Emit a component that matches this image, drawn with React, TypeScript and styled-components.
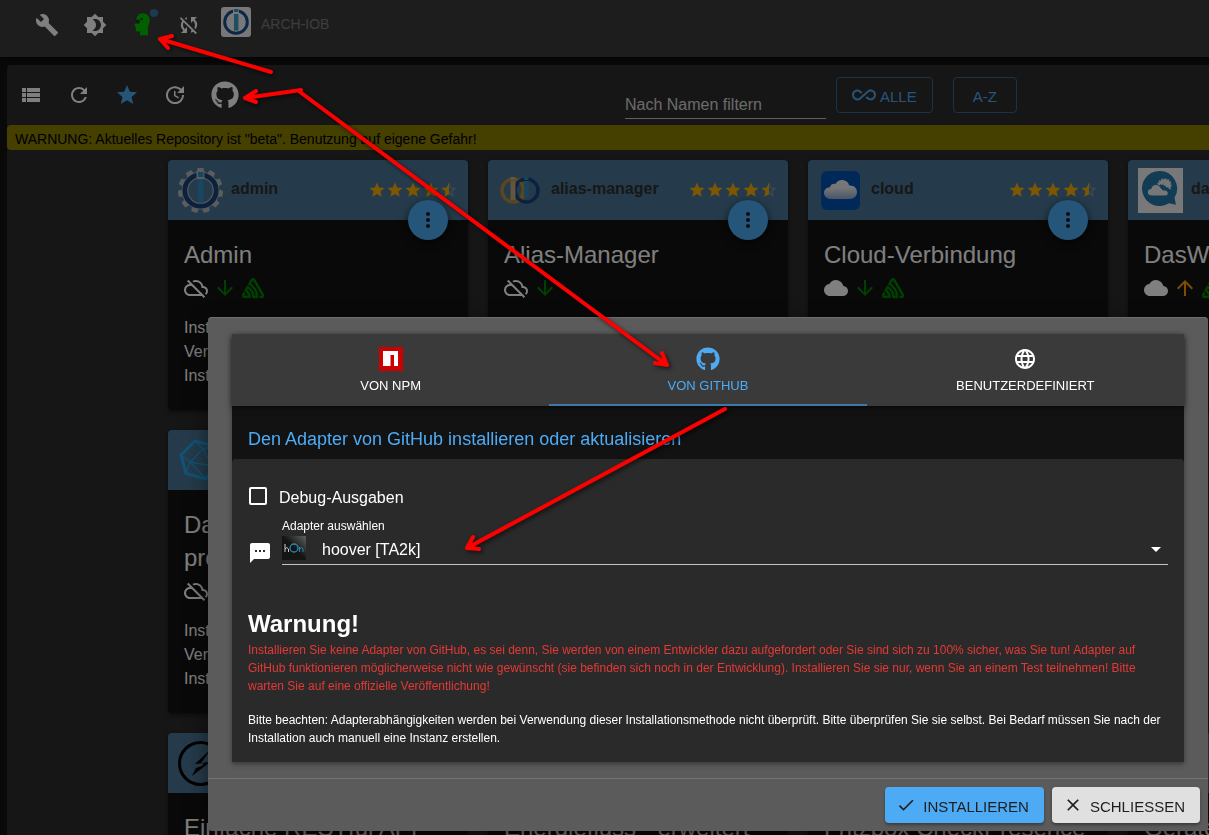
import React from 'react';
import styled, { createGlobalStyle } from 'styled-components';
import {
  MdAllInclusive,
  MdArrowDownward,
  MdArrowDropDown,
  MdArrowUpward,
  MdBrightness4,
  MdBuild,
  MdCheck,
  MdClose,
  MdCloud,
  MdLanguage,
  MdMoreVert,
  MdOutlineCloudOff,
  MdRefresh,
  MdSms,
  MdStar,
  MdStarBorder,
  MdSyncDisabled,
  MdUpdate,
  MdViewList,
} from 'react-icons/md';
import { FaGithub } from 'react-icons/fa';
import { SiSentry } from 'react-icons/si';

const GlobalStyle = createGlobalStyle`
  *, *::before, *::after { box-sizing: border-box; }
  html, body { margin: 0; height: 100%; overflow: hidden; }
  body {
    background: #121212;
    color: #fff;
    font-family: 'Liberation Sans', Arial, Helvetica, sans-serif;
    font-size: 16px;
    line-height: 24px;
  }
  #root { height: 100%; }
  button, input, select { font: inherit; color: inherit; }
  button { cursor: pointer; }
`;

/* ---------- page behind the dialog ---------- */

const Page = styled.div`
  height: 100vh;
  overflow: hidden;
`;

const AppBar = styled.header`
  display: flex;
  align-items: center;
  height: 57px;
  padding: 0 23px 8px;
  background: #3b3b3b;
  box-shadow: 0 2px 8px rgba(0, 0, 0, 0.6);
`;

const IconButton = styled.button<{ $color?: string }>`
  position: relative;
  display: flex;
  align-items: center;
  justify-content: center;
  min-width: 48px;
  height: 48px;
  padding: 0;
  border: 0;
  background: none;
  color: ${(p) => p.$color ?? '#fff'};
`;

const ExpertButton = styled(IconButton)`
  padding-right: 2px;
`;

const GithubButton = styled(IconButton)`
  min-width: 52px;
`;

const Dot = styled.span`
  position: absolute;
  top: 8px;
  right: 9px;
  width: 8px;
  height: 8px;
  border-radius: 50%;
  background: #3f73a5;
`;

const SyncState = styled.span`
  display: flex;
  padding: 0 20px 0 10px;
`;

const HostLogo = styled.span`
  display: flex;
  width: 30px;
  height: 30px;
  margin: -6px 10px 0 0;
  border-radius: 3px;
  background: #f0f0f0;
`;

const HostName = styled.span`
  margin-top: -2px;
  font-size: 14px;
  color: #7a7a7a;
`;

const Content = styled.main`
  margin: 8px 0 0 7px;
  height: calc(100% - 65px);
  border-radius: 4px 0 0 0;
  background: #2c2c2c;
`;

const Toolbar = styled.div`
  display: flex;
  align-items: center;
  height: 60px;
  overflow: hidden;
`;

const ToolGroup = styled.div`
  display: flex;
  width: 51%;
`;

const Filters = styled.div`
  display: flex;
  align-items: center;
`;

const FilterInput = styled.input`
  width: 201px;
  height: 32px;
  margin: 15px 10px 0 5px;
  padding: 8px 0 3px;
  border: 0;
  border-bottom: 1px solid #c0c0c0;
  background: none;
  &::placeholder { color: #fff; opacity: 0.8; }
`;

const OutlinedButton = styled.button`
  display: flex;
  align-items: center;
  gap: 4px;
  height: 36px;
  margin-right: 20px;
  padding: 4px 15px 0;
  border: 1px solid #2f6894;
  border-radius: 4px;
  background: none;
  color: #4dabf5;
  font-size: 15px;
  svg { margin-top: -5px; }
`;

const SortButton = styled(OutlinedButton)`
  width: 64px;
  justify-content: center;
`;

const Notice = styled.div`
  height: 25px;
  padding: 2px 8px 0;
  border-radius: 4px 0 0 4px;
  background: #8a7e00;
  color: #000;
  font-size: 14px;
`;

const CardList = styled.div`
  display: grid;
  gap: 20px;
  padding: 10px 0 0 161px;
`;

const CardRow = styled.div`
  display: flex;
  gap: 20px;
`;

const Card = styled.article`
  flex: 0 0 300px;
  min-height: 250px;
  border-radius: 4px;
  background: #121212;
  box-shadow: 0 2px 4px rgba(0, 0, 0, 0.5);
`;

const CardHead = styled.div`
  position: relative;
  display: flex;
  align-items: center;
  gap: 8px;
  height: 60px;
  padding: 0 10px;
  border-radius: 4px 4px 0 0;
  background: #4a7696;
`;

const AdapterName = styled.strong`
  flex: 1;
  margin-top: -2px;
  color: #2e2e2e;
  white-space: nowrap;
`;

const Rating = styled.div`
  display: flex;
  color: #faaf00;
  svg { display: block; }
`;

const HalfStar = styled.span`
  position: relative;
  color: #7d96a8;
`;

const HalfFill = styled.span`
  position: absolute;
  top: 0;
  left: 0;
  width: 9px;
  overflow: hidden;
  color: #faaf00;
`;

const Fab = styled.button`
  position: absolute;
  right: 20px;
  bottom: -20px;
  display: flex;
  align-items: center;
  justify-content: center;
  width: 40px;
  height: 40px;
  padding: 0;
  border: 0;
  border-radius: 50%;
  background: #4dabf5;
  color: #1c1c1c;
  box-shadow: 0 3px 8px rgba(0, 0, 0, 0.7);
`;

const CardBody = styled.div`
  padding: 18px 16px 22px;
`;

const CardTitle = styled.h2`
  margin: 0;
  font-size: 24px;
  font-weight: 400;
  line-height: 33px;
`;

const Traits = styled.div`
  display: flex;
  align-items: center;
  gap: 5px;
  height: 34px;
`;

const CardFacts = styled.div`
  padding-top: 11px;
`;

/* ---------- dialog ---------- */

const Backdrop = styled.div`
  position: fixed;
  inset: 0;
  display: flex;
  align-items: flex-start;
  padding: 317px 1px 0 208px;
  background: rgba(0, 0, 0, 0.5);
`;

const Dialog = styled.section`
  flex: 1;
  border-radius: 4px;
  background: #5b5b5b;
  box-shadow: inset 0 1px #6c6c6c, 0 8px 24px rgba(0, 0, 0, 0.5);
`;

const DialogContent = styled.div`
  padding: 17px 24px 16px;
`;

const Panel = styled.div`
  background: #121212;
  box-shadow: 0 2px 5px rgba(0, 0, 0, 0.4);
`;

const Tabs = styled.div`
  position: relative;
  display: grid;
  grid-template-columns: repeat(3, 1fr);
  height: 72px;
  background: #3a3a3a;
  box-shadow: 0 2px 6px rgba(0, 0, 0, 0.5);
`;

const Tab = styled.button<{ $active?: boolean }>`
  display: flex;
  flex-direction: column;
  align-items: center;
  gap: 7px;
  padding: 13px 0 0;
  border: 0;
  border-bottom: 2px solid ${(p) => (p.$active ? '#3f77a8' : 'transparent')};
  background: none;
  color: ${(p) => (p.$active ? '#4dabf5' : '#fff')};
  font-size: 13px;
  line-height: 16px;
`;

const PanelTitle = styled.h3`
  margin: 0;
  padding: 21px 16px 8px;
  color: #4dabf5;
  font-size: 18px;
  font-weight: 400;
`;

const PanelBody = styled.div`
  padding: 26px 16px 15px;
  border-radius: 4px 4px 0 0;
  background: #2a2a2a;
`;

const CheckLabel = styled.label`
  display: flex;
  align-items: center;
  gap: 12px;
  height: 25px;
  padding-left: 1px;
  span { padding-top: 1px; }
`;

const CheckBox = styled.input`
  appearance: none;
  width: 18px;
  height: 18px;
  margin: 0 0 4px;
  border: 2px solid #fff;
  border-radius: 2px;
`;

const SelectRow = styled.div`
  display: flex;
  align-items: flex-end;
  gap: 10px;
  margin-top: 7px;
`;

const Field = styled.div`
  flex: 1;
`;

const FieldLabel = styled.label`
  display: block;
  font-size: 12px;
  line-height: 18px;
`;

const SelectBox = styled.div`
  position: relative;
  border-bottom: 1px solid #c4c4c4;
`;

const AdapterSelect = styled.select`
  display: block;
  appearance: none;
  width: 100%;
  height: 29px;
  padding: 1px 32px 0 40px;
  border: 0;
  background: none;
`;

const SelectIcon = styled.span<{ $end?: boolean }>`
  position: absolute;
  top: ${(p) => (p.$end ? '2px' : '1px')};
  ${(p) => (p.$end ? 'right: 0;' : 'left: 0;')}
  display: flex;
  pointer-events: none;
`;

const WarnTitle = styled.h2`
  margin: 42px 0 0;
  font-size: 24px;
  line-height: 34px;
`;

const Note = styled.p<{ $error?: boolean }>`
  margin: 0 0 16px;
  color: ${(p) => (p.$error ? '#e53935' : '#fff')};
  font-size: 12px;
  line-height: 18px;
  &:last-child { margin-bottom: 0; }
`;

const Actions = styled.footer`
  display: flex;
  justify-content: flex-end;
  gap: 8px;
  padding: 8px;
  border-top: 1px solid #737373;
`;

const ActionButton = styled.button<{ $primary?: boolean }>`
  display: flex;
  align-items: center;
  gap: 7px;
  height: 36px;
  padding: 0 15px 0 11px;
  border: 0;
  border-radius: 4px;
  background: ${(p) => (p.$primary ? '#4dabf5' : '#e0e0e0')};
  color: #1e1e1e;
  font-size: 15px;
  box-shadow: 0 2px 3px rgba(0, 0, 0, 0.35);
  span { padding-top: 3px; }
`;

const Annotations = styled.svg`
  position: fixed;
  top: 0;
  left: 0;
  pointer-events: none;
  filter: drop-shadow(2px 2px 2px rgba(0, 0, 0, 0.6));
`;

/* ---------- drawings ---------- */

const ExpertHead = () => (
  <svg width="16" height="23" viewBox="0 0 16 23">
    <path
      fill="#00c000"
      d="M2 8C2.500 3 5 .3 8.800 .3c4 0 6.900 3 6.900 7 0 3-1.200 4.700-1.700 6.700v8.300H6V18.500H3.200c-1.200 0-1.400-.7-1.400-2v-2.700L.3 12.600 2 9.500z"
    />
    <circle cx="3.800" cy="8.600" r="2.200" fill="#2e2e2e" />
    <circle cx="7.600" cy="6" r="1.200" fill="#2e2e2e" />
  </svg>
);

const BrokerRing = ({ size = 30 }: { size?: number }) => (
  <svg width={size} height={size} viewBox="0 0 30 30">
    <circle cx="15" cy="15" r="11.300" fill="none" stroke="#164f8f" strokeWidth="3" />
    <path d="M12 1h6v6h-6z" fill="#f0f0f0" />
    <path d="M13 2h4.400v3H13zM13 7h4.400v16.500H13z" fill="#3a9fc9" />
  </svg>
);

const AdminLogo = () => (
  <svg width="45" height="45" viewBox="0 0 45 45">
    {Array.from({ length: 11 }, (_, i) => (
      <path key={i} d="M19.500 0h6l1 6h-8z" fill="#b8b8b8" transform={`rotate(${(i * 360) / 11} 22.500 22.500)`} />
    ))}
    <circle cx="22.500" cy="22.500" r="15.500" fill="none" stroke="#b8b8b8" strokeWidth="6.500" />
    <circle cx="22.500" cy="22.500" r="15.700" fill="none" stroke="#16427c" strokeWidth="4.800" />
    <path d="M18.500 3h8v8h-8z" fill="#b8b8b8" />
    <path d="M20 4h5.500v5H20zM20 11h5.500v23.500H20z" fill="#2f8fc0" />
  </svg>
);

const AliasLogo = () => (
  <svg width="45" height="45" viewBox="0 0 45 45">
    <circle cx="15.500" cy="22.500" r="11.500" fill="none" stroke="#b98d3c" strokeWidth="3.500" />
    <circle cx="28.500" cy="22.500" r="11.500" fill="none" stroke="#16427c" strokeWidth="3.500" />
    <path d="M12.500 9h5v3h-5zM12.500 13h5v19h-5z" fill="#c9ad7c" />
    <path d="M26 9h4.500v3H26zM26 13h4.500v17H26z" fill="#3489b8" />
    <path d="M22 14q5 8 0 16" fill="none" stroke="#b98d3c" strokeWidth="2" />
  </svg>
);

const CloudLogo = () => (
  <svg width="45" height="45" viewBox="0 0 45 45">
    <defs>
      <linearGradient id="cloudFill" x1="0" y1="0" x2="0" y2="1">
        <stop offset="0.4" stopColor="#efefef" />
        <stop offset="1" stopColor="#8fa9d0" />
      </linearGradient>
    </defs>
    <rect x="3" y="3" width="39" height="39" rx="6" fill="#0052b4" />
    <path
      fill="url(#cloudFill)"
      d="M13 31c-4 0-7-2.700-7-6s2.500-5.500 6-5.700c1-3 3-3.800 5.500-3.300C19 13.300 21 12 24 12c3.500 0 6.500 2.300 7.200 5.500 4.500-.5 7.800 2.500 7.800 6.500s-3 7-7 7z"
    />
  </svg>
);

const WeatherLogo = () => (
  <svg width="45" height="45" viewBox="0 0 45 45">
    <path d="M0 0h45v45H0z" fill="#f0f0f0" />
    <path d="M21.500 3a17.500 17.500 0 1 0 9.500 32.200l7 1.500-1.500-7A17.500 17.500 0 0 0 21.500 3z" fill="#2478aa" />
    <path
      d="M20 17c1-4 4-6 7.500-5.500 4.500.5 6 4.500 4.500 8.500l-4-2-3-2.500z"
      fill="#eee"
      stroke="#eee"
      strokeDasharray="2 1"
      strokeWidth="2"
    />
    <path
      d="M14 28c-6 0-6-7-1-7.500 1-5 8-5.500 10-.5l2 2c6-1 7 6 2 6z"
      fill="#eee"
      stroke="#2478aa"
      strokeWidth="1"
    />
  </svg>
);

const InfluxLogo = () => (
  <svg width="45" height="45" viewBox="0 0 45 45" fill="none" stroke="#22a5ec" strokeWidth="1.300">
    <path strokeWidth="3" strokeLinejoin="round" d="M17 3l19 5 6 18-14 15-20-5.500L3 17z" />
    <path d="M17 3l8 8 11-3M25 11L12 24l22 4zM3 17l9 7-4 12M34 28l8-2M34 28l-6 13M12 24l16 17" />
  </svg>
);

const BoltLogo = () => (
  <svg width="45" height="45" viewBox="0 0 45 45">
    <circle cx="22.500" cy="22.500" r="21" fill="none" stroke="#000" strokeWidth="3" />
    <path d="M33 8L17 23l9-1-2 3-6 2-4 8 18-14-9 1z" fill="#000" />
  </svg>
);

const NpmLogo = () => (
  <svg width="24" height="24" viewBox="0 0 24 24">
    <path d="M0 0h24v24H0z" fill="#cb0000" />
    <path d="M4 4h15v15h-4V8h-3.500v11H4z" fill="#fff" />
  </svg>
);

const HonLogo = () => (
  <svg width="24" height="24" viewBox="0 0 24 24">
    <defs>
      <linearGradient id="honFill" x1="0" y1="1" x2="1" y2="0">
        <stop offset="0.5" stopColor="#141412" />
        <stop offset="1" stopColor="#606060" />
      </linearGradient>
    </defs>
    <path d="M0 0h24v24H0z" fill="url(#honFill)" />
    <path d="M3 8v8M3 13q2-3 3.500 0v3" fill="none" stroke="#ccc" />
    <circle cx="12" cy="12" r="4" fill="none" stroke="#2b86b0" strokeWidth="1.300" />
    <path d="M17.500 11v5M17.500 13q2-3 3.500 0v3" fill="none" stroke="#2b86b0" />
  </svg>
);

/* ---------- cards ---------- */

type Adapter = {
  name: string;
  title: string[];
  logo: React.ReactNode;
  cloud?: boolean;
  update?: boolean;
  sentry?: boolean;
  facts?: string[];
};

const facts = ['Inst', 'Ver', 'Inst'];

const rows: Adapter[][] = [
  [
    { name: 'admin', title: ['Admin'], logo: <AdminLogo />, sentry: true, facts },
    { name: 'alias-manager', title: ['Alias-Manager'], logo: <AliasLogo /> },
    { name: 'cloud', title: ['Cloud-Verbindung'], logo: <CloudLogo />, cloud: true, sentry: true },
    { name: 'daswetter', title: ['DasWetter'], logo: <WeatherLogo />, cloud: true, update: true, sentry: true },
  ],
  [{ name: '', title: ['Da', 'pro'], logo: <InfluxLogo />, facts }],
  [
    { name: '', title: ['Einfache RESTful API'], logo: <BoltLogo /> },
    { name: '', title: ['Energiefluss - erweitert'], logo: null },
    { name: '', title: ['Fritzbox CheckPresence'], logo: null },
    { name: '', title: ['Geräte'], logo: null },
  ],
];

const Stars = () => (
  <Rating role="img" aria-label="4,5">
    {[0, 1, 2, 3].map((i) => (
      <MdStar key={i} size={18} />
    ))}
    <HalfStar>
      <MdStarBorder size={18} />
      <HalfFill>
        <MdStar size={18} />
      </HalfFill>
    </HalfStar>
  </Rating>
);

const AdapterCard = ({ adapter }: { adapter: Adapter }) => (
  <Card>
    <CardHead>
      {adapter.logo}
      <AdapterName>{adapter.name}</AdapterName>
      <Stars />
      <Fab aria-label="Menü">
        <MdMoreVert size={24} />
      </Fab>
    </CardHead>
    <CardBody>
      <CardTitle>
        {adapter.title.map((line) => (
          <div key={line}>{line}</div>
        ))}
      </CardTitle>
      <Traits>
        {adapter.cloud ? <MdCloud size={24} /> : <MdOutlineCloudOff size={24} />}
        {adapter.update ? <MdArrowUpward size={24} color="#ff9800" /> : <MdArrowDownward size={24} color="#008000" />}
        {adapter.sentry && <SiSentry size={22} color="#008000" stroke="#008000" strokeWidth={1} />}
      </Traits>
      {adapter.facts && (
        <CardFacts>
          {adapter.facts.map((fact, i) => (
            <div key={i}>{fact}</div>
          ))}
        </CardFacts>
      )}
    </CardBody>
  </Card>
);

export default function App() {
  return (
    <>
      <GlobalStyle />
      <Page>
        <AppBar>
          <IconButton aria-label="Einstellungen"><MdBuild size={24} /></IconButton>
          <IconButton aria-label="Farbschema"><MdBrightness4 size={24} /></IconButton>
          <ExpertButton aria-label="Expertenmodus">
            <ExpertHead />
            <Dot />
          </ExpertButton>
          <SyncState><MdSyncDisabled size={24} /></SyncState>
          <HostLogo><BrokerRing /></HostLogo>
          <HostName>ARCH-IOB</HostName>
        </AppBar>
        <Content>
          <Toolbar>
            <ToolGroup>
              <IconButton aria-label="Liste"><MdViewList size={24} /></IconButton>
              <IconButton aria-label="Aktualisieren"><MdRefresh size={24} /></IconButton>
              <IconButton aria-label="Favoriten" $color="#4dabf5"><MdStar size={24} /></IconButton>
              <IconButton aria-label="Updates"><MdUpdate size={24} /></IconButton>
              <GithubButton aria-label="GitHub"><FaGithub size={28} /></GithubButton>
            </ToolGroup>
            <Filters>
              <FilterInput placeholder="Nach Namen filtern" aria-label="Nach Namen filtern" />
              <OutlinedButton><MdAllInclusive size={24} />ALLE</OutlinedButton>
              <SortButton>A-Z</SortButton>
            </Filters>
          </Toolbar>
          <Notice>WARNUNG: Aktuelles Repository ist "beta". Benutzung auf eigene Gefahr!</Notice>
          <CardList>
            {rows.map((row, i) => (
              <CardRow key={i}>
                {row.map((adapter) => (
                  <AdapterCard key={adapter.title[0]} adapter={adapter} />
                ))}
              </CardRow>
            ))}
          </CardList>
        </Content>
      </Page>

      <Backdrop>
        <Dialog role="dialog" aria-modal="true">
          <DialogContent>
            <Panel>
              <Tabs role="tablist">
                <Tab role="tab"><NpmLogo />VON NPM</Tab>
                <Tab role="tab" aria-selected $active><FaGithub size={24} />VON GITHUB</Tab>
                <Tab role="tab"><MdLanguage size={24} />BENUTZERDEFINIERT</Tab>
              </Tabs>
              <PanelTitle>Den Adapter von GitHub installieren oder aktualisieren</PanelTitle>
              <PanelBody>
                <CheckLabel>
                  <CheckBox type="checkbox" />
                  <span>Debug-Ausgaben</span>
                </CheckLabel>
                <SelectRow>
                  <MdSms size={24} />
                  <Field>
                    <FieldLabel htmlFor="adapter">Adapter auswählen</FieldLabel>
                    <SelectBox>
                      <SelectIcon><HonLogo /></SelectIcon>
                      <AdapterSelect id="adapter">
                        <option>hoover [TA2k]</option>
                      </AdapterSelect>
                      <SelectIcon $end><MdArrowDropDown size={24} /></SelectIcon>
                    </SelectBox>
                  </Field>
                </SelectRow>
                <WarnTitle>Warnung!</WarnTitle>
                <Note $error>
                  Installieren Sie keine Adapter von GitHub, es sei denn, Sie werden von einem Entwickler dazu
                  aufgefordert oder Sie sind sich zu 100% sicher, was Sie tun! Adapter auf GitHub funktionieren
                  möglicherweise nicht wie gewünscht (sie befinden sich noch in der Entwicklung). Installieren Sie sie
                  nur, wenn Sie an einem Test teilnehmen! Bitte warten Sie auf eine offizielle Veröffentlichung!
                </Note>
                <Note>
                  Bitte beachten: Adapterabhängigkeiten werden bei Verwendung dieser Installationsmethode nicht
                  überprüft. Bitte überprüfen Sie sie selbst. Bei Bedarf müssen Sie nach der Installation auch manuell
                  eine Instanz erstellen.
                </Note>
              </PanelBody>
            </Panel>
          </DialogContent>
          <Actions>
            <ActionButton $primary><MdCheck size={20} /><span>INSTALLIEREN</span></ActionButton>
            <ActionButton><MdClose size={20} /><span>SCHLIESSEN</span></ActionButton>
          </Actions>
        </Dialog>
      </Backdrop>

      <Annotations width="1209" height="835" fill="none" stroke="#ff0000" strokeWidth="4" strokeLinecap="round" strokeLinejoin="round">
        <path d="M271 72L160 39M172 36L160 39l8 9" />
        <path d="M301 90l-56 8M256 91l-11 7 11 4" />
        <path d="M300 92l367 273M662 353l5 12-12-2" />
        <path d="M725 409L467 548M473 537l-6 11 12 1" />
      </Annotations>
    </>
  );
}
